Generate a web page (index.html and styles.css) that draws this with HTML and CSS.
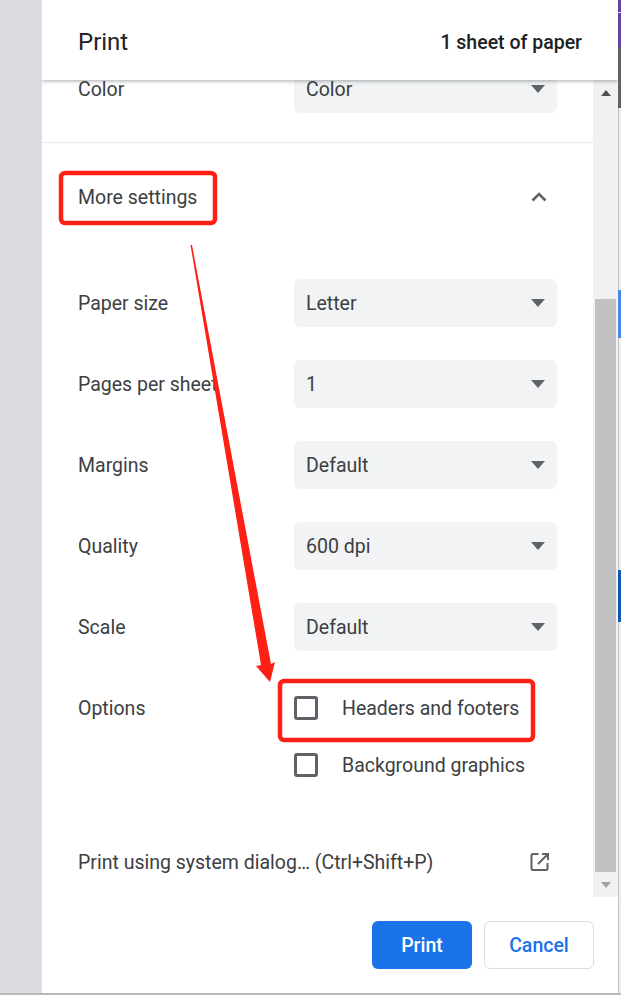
FILE: index.html
```html
<!DOCTYPE html>
<html lang="en">
<head>
<meta charset="utf-8">
<title>Print</title>
<link rel="stylesheet" href="styles.css">
</head>
<body>
<div class="page">
  <div class="backdrop"></div>
  <main class="dialog">
    <header class="header">
      <h1 class="title">Print</h1>
      <span class="sheets">1 sheet of paper</span>
    </header>
    <div class="body">
      <div class="scroller">
        <div class="section-top">
          <div class="row"><span class="label">Color</span><div class="select"><span>Color</span><i class="caret"></i></div></div>
        </div>
        <div class="more-row">
          <span class="label">More settings</span>
          <svg class="chevron" width="16" height="10" viewBox="0 0 16 10"><path d="M1.500 8.500 8 2l6.500 6.500" fill="none" stroke="#5f6368" stroke-width="2.600"/></svg>
        </div>
        <div class="rows">
          <div class="row"><span class="label">Paper size</span><div class="select"><span>Letter</span><i class="caret"></i></div></div>
          <div class="row"><span class="label">Pages per sheet</span><div class="select"><span>1</span><i class="caret"></i></div></div>
          <div class="row"><span class="label">Margins</span><div class="select"><span>Default</span><i class="caret"></i></div></div>
          <div class="row"><span class="label">Quality</span><div class="select"><span>600 dpi</span><i class="caret"></i></div></div>
          <div class="row"><span class="label">Scale</span><div class="select"><span>Default</span><i class="caret"></i></div></div>
        </div>
        <div class="options">
          <div class="options-label"><span class="label">Options</span></div>
          <div class="checks">
            <div class="check"><i class="box"></i><span>Headers and footers</span></div>
            <div class="check"><i class="box"></i><span>Background graphics</span></div>
          </div>
        </div>
        <div class="system">
          <span>Print using system dialog… (Ctrl+Shift+P)</span>
          <svg class="external" width="20" height="20" viewBox="0 0 20 20"><path d="M8.500 2H3a1.500 1.500 0 0 0-1.500 1.500v13A1.500 1.500 0 0 0 3 18h13a1.500 1.500 0 0 0 1.500-1.500V11M12 2h6v6M18 2 8 12" fill="none" stroke="#5f6368" stroke-width="2"/></svg>
        </div>
      </div>
      <div class="scrollbar">
        <div class="sb-btn"><i class="sb-up"></i></div>
        <div class="sb-space"></div>
        <div class="sb-thumb"></div>
        <div class="sb-btn"><i class="sb-down"></i></div>
      </div>
    </div>
    <footer class="footer">
      <button class="btn primary">Print</button>
      <button class="btn secondary">Cancel</button>
    </footer>
  </main>
  <div class="strip">
    <div class="seg s-purple"></div>
    <div class="seg s-white"></div>
    <div class="seg s-purple2"></div>
    <div class="seg s-gray"></div>
    <div class="seg s-pale1"></div>
    <div class="seg s-blue"></div>
    <div class="seg s-pale2"></div>
    <div class="seg s-navy"></div>
    <div class="seg s-pale3"></div>
  </div>
  <svg class="annot" width="621" height="995" viewBox="0 0 621 995">
    <rect x="61" y="173" width="154" height="50" rx="4" fill="none" stroke="#ff2015" stroke-width="4.500"/>
    <rect x="280" y="681" width="253" height="59" rx="4" fill="none" stroke="#ff2015" stroke-width="4.500"/>
    <polygon points="190.500,245 192,245 271,664 275,662 270,682 256,666 261,665" fill="#ff2015"/>
  </svg>
</div>
</body>
</html>
```
FILE: styles.css
```css
* { box-sizing: border-box; }
html, body { margin: 0; padding: 0; background: #fff; }
body { font-family: Roboto, "Liberation Sans", sans-serif; font-size: 19.5px; color: #3c4043; }
.page { position: relative; display: flex; width: 621px; height: 995px; overflow: hidden; border-bottom: 2px solid #b9b9b9; }
.backdrop { width: 42px; background: #dadce0; }
.dialog { width: 576px; display: flex; flex-direction: column; background: #fff; overflow: hidden; }
.header { position: relative; z-index: 2; height: 80px; flex: none; display: flex; align-items: center; justify-content: space-between; padding: 3px 36px 0; background: #fff; box-shadow: 0 1px 4px rgba(60,64,67,.45); }
.title { margin: 0; font-size: 24px; font-weight: 400; color: #202124; }
.sheets { padding-top: 2px; font-size: 19.5px; font-weight: 500; color: #202124; }
.body { display: flex; height: 817px; flex: none; overflow: hidden; }
.scroller { width: 551px; flex: none; margin-top: -15px; }
.section-top { padding-bottom: 29px; border-bottom: 1px solid #e8eaed; }
.row { display: flex; align-items: center; height: 48px; padding-left: 36px; line-height: 16px; }
.row .label, .select span { padding-top: 2px; }
.label { display: block; width: 216px; flex: none; white-space: nowrap; }
.select { width: 263px; height: 48px; display: flex; align-items: center; justify-content: space-between; padding: 0 12px; background: #f1f3f4; border-radius: 6px; }
.caret { width: 0; height: 0; border-left: 7.500px solid transparent; border-right: 7.500px solid transparent; border-top: 8px solid #5f6368; }
.more-row { display: flex; align-items: center; justify-content: space-between; height: 108px; padding-left: 36px; padding-right: 46px; }
.chevron { display: block; }
.rows { display: flex; flex-direction: column; gap: 33px; padding-top: 28px; }
.options { display: flex; padding: 33px 0 0 36px; }
.options-label { display: flex; align-items: center; height: 48px; }
.checks { display: flex; flex-direction: column; gap: 9px; }
.check { display: flex; align-items: center; gap: 24px; height: 48px; }
.box { width: 24px; height: 24px; border: 3px solid #5f6368; border-radius: 3px; }
.system { display: flex; align-items: center; justify-content: space-between; height: 48px; margin-top: 49px; padding-left: 36px; padding-right: 43px; }
.external { display: block; }
.scrollbar { width: 25px; flex: none; display: flex; flex-direction: column; align-items: center; background: #f1f1f1; }
.sb-btn { height: 25px; flex: none; width: 100%; display: flex; align-items: center; justify-content: center; }
.sb-space { height: 194px; flex: none; }
.sb-thumb { width: 21px; height: 573px; flex: none; background: #c1c1c1; }
.sb-up { width: 0; height: 0; border-left: 5.500px solid transparent; border-right: 5.500px solid transparent; border-bottom: 6px solid #505050; }
.sb-down { width: 0; height: 0; border-left: 5.500px solid transparent; border-right: 5.500px solid transparent; border-top: 6px solid #a3a3a3; }
.footer { flex: none; display: flex; justify-content: flex-end; gap: 12px; padding: 24px 24px 0 0; }
.btn { height: 48px; border-radius: 6px; font-family: inherit; font-size: 19.5px; font-weight: 500; }
.primary { width: 100px; background: #1a73e8; border: 0; color: #fff; }
.secondary { width: 110px; background: #fff; border: 1px solid #dadce0; color: #1a73e8; }
.strip { width: 3px; flex: none; display: flex; flex-direction: column; background: #e8eaed; }
.seg { flex: none; }
.s-purple { height: 12px; background: #6b3fa0; }
.s-white { height: 1px; background: #e6e0f0; }
.s-purple2 { height: 34px; background: #6b3fa0; }
.s-gray { height: 61px; background: #616161; }
.s-pale1 { height: 182px; background: #eceef0; border-left: 1px solid #c4c4c4; }
.s-blue { height: 48px; background: #4a86e8; }
.s-pale2 { height: 232px; background: #eceef0; border-left: 1px solid #c4c4c4; }
.s-navy { height: 52px; background: #1259b5; }
.s-pale3 { height: 371px; background: #eceef0; border-left: 1px solid #c4c4c4; }
.annot { position: absolute; left: 0; top: 0; z-index: 5; pointer-events: none; }
```
